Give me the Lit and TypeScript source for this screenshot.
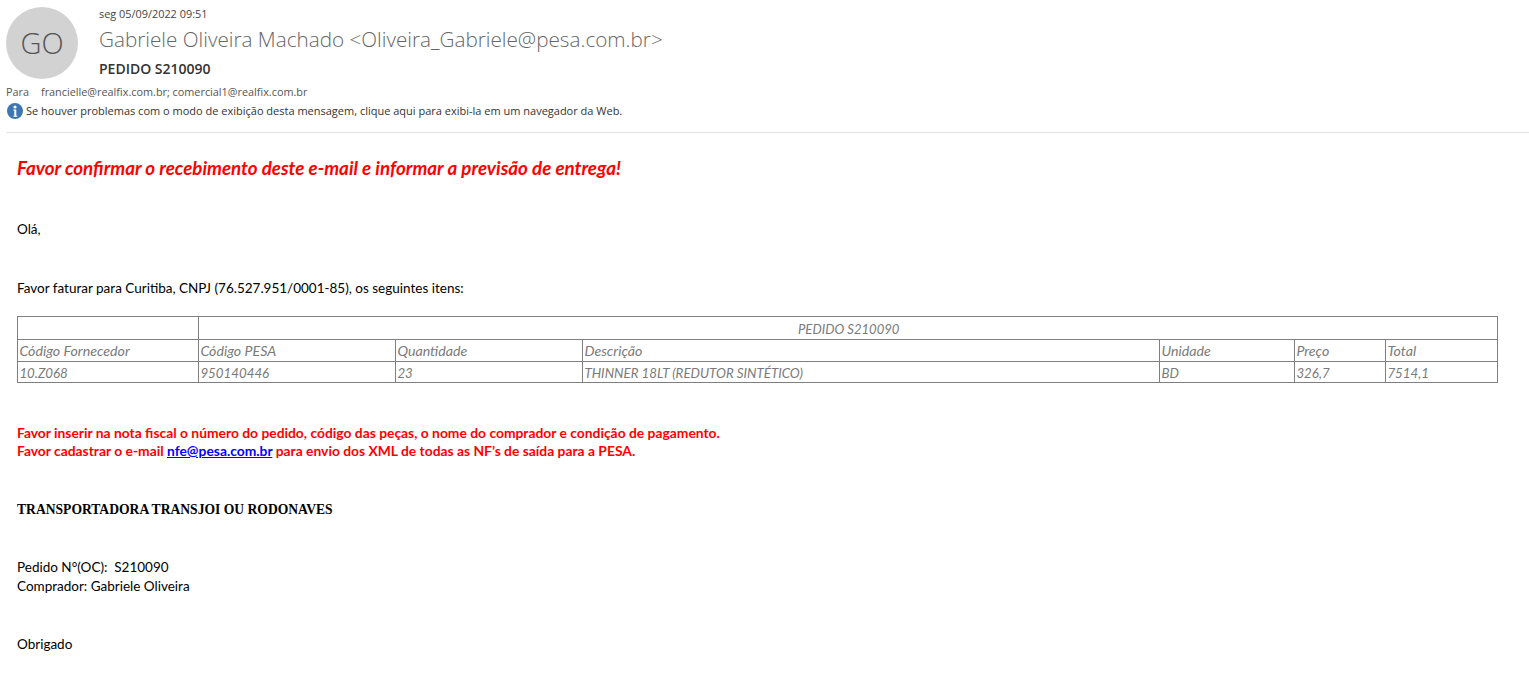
import { LitElement, html, css } from "lit";
import { customElement } from "lit/decorators.js";

@customElement("app-root")
export class AppRoot extends LitElement {
  static styles = css`
    :host { display: block; width: 1529px; height: 688px; overflow: hidden; background: #fff; color: #000; font-family: "Open Sans", sans-serif; }
    .head { display: flex; gap: 21px; padding: 7px 0 0 6px; height: 75px; }
    .avatar { width: 72px; height: 72px; padding-bottom: 2px; box-sizing: border-box; border-radius: 50%; background: #d2d2d2; color: #555; display: flex; align-items: center; justify-content: center; font-size: 29px; font-weight: 300; flex: none; }
    .meta { display: flex; flex-direction: column; }
    .date { font-size: 10.9px; line-height: 14px; color: #444; }
    .from { font-size: 20.7px; line-height: 28px; margin-top: 4px; color: #666; font-weight: 300; }
    .subj { font-size: 14px; font-weight: 600; line-height: 20px; margin-top: 6px; color: #333; }
    .to { display: flex; gap: 12px; padding-left: 6px; font-size: 10.85px; line-height: 14px; margin-top: 3px; color: #555; }
    .info { display: flex; align-items: center; gap: 3px; padding-left: 7px; margin-top: 4px; font-size: 11px; line-height: 16px; color: #333; }
    .info svg { flex: none; }
    hr { border: 0; border-top: 1px solid #e3e3e3; margin: 13px 0 0 6px; }
    .body { padding: 0 0 0 17px; font-family: "Lato", sans-serif; font-size: 13.5px; line-height: 18px; }
    .alert { font-size: 18.8px; font-weight: 700; font-style: italic; color: #f00; line-height: 24px; margin-top: 23px; }
    .hello { margin-top: 40px; }
    .fat { margin-top: 41px; }
    table { border-collapse: collapse; table-layout: fixed; width: 1481px; margin-top: 19px; color: #7a7a7a; font-style: italic; }
    td { border: 1px solid #7f7f7f; padding: 0 0 0 1.4px; height: 21px; line-height: 18px; white-space: nowrap; overflow: hidden; }
    tr.top td { height: 23px; font-size: 13.1px; padding-top: 2px; box-sizing: border-box; }
    tr.top td.c { text-align: center; }
    tr.labels td { font-size: 14.2px; }
    tr.values td { font-size: 13.3px; height: 19px; padding-top: 1px; }
    .red { color: #f00; font-size: 13.85px; font-weight: 700; margin-top: 41px; }
    .red a { color: #00f; text-decoration: underline; }
    .carrier { font-family: "Liberation Serif", serif; font-weight: 700; font-size: 13.6px; margin-top: 41px; }
    .order { margin-top: 39px; line-height: 19px; }
    .thanks { margin-top: 39px; }
  `;

  render() {
    const w = [181, 197, 187, 577, 135, 91, 112];
    return html`
      <div class="head">
        <div class="avatar">GO</div>
        <div class="meta">
          <div class="date">seg 05/09/2022 09:51</div>
          <div class="from">Gabriele Oliveira Machado &lt;Oliveira_Gabriele@pesa.com.br&gt;</div>
          <div class="subj">PEDIDO S210090</div>
        </div>
      </div>
      <div class="to"><span>Para</span><span>francielle@realfix.com.br; comercial1@realfix.com.br</span></div>
      <div class="info">
        <svg width="16" height="16" viewBox="0 0 16 16"><circle cx="8" cy="8" r="8" fill="#3f76b1"/><circle cx="8" cy="4" r="1.6" fill="#fff"/><path d="M6.3 6.6h3v6.2h1v1H6.3v-1h1V7.6h-1z" fill="#fff"/></svg>
        <span>Se houver problemas com o modo de exibição desta mensagem, clique aqui para exibi-la em um navegador da Web.</span>
      </div>
      <hr />
      <div class="body">
        <div class="alert">Favor confirmar o recebimento deste e-mail e informar a previsão de entrega!</div>
        <div class="hello">Olá,</div>
        <div class="fat">Favor faturar para Curitiba, CNPJ (76.527.951/0001-85), os seguintes itens:</div>
        <table>
          <colgroup>${w.map((x) => html`<col style="width:${x}px" />`)}</colgroup>
          <tr class="top"><td></td><td class="c" colspan="6">PEDIDO S210090</td></tr>
          <tr class="labels"><td>Código Fornecedor</td><td>Código PESA</td><td>Quantidade</td><td>Descrição</td><td>Unidade</td><td>Preço</td><td>Total</td></tr>
          <tr class="values"><td>10.Z068</td><td>950140446</td><td>23</td><td>THINNER 18LT (REDUTOR SINTÉTICO)</td><td>BD</td><td>326,7</td><td>7514,1</td></tr>
        </table>
        <div class="red">
          Favor inserir na nota fiscal o número do pedido, código das peças, o nome do comprador e condição de pagamento.<br />
          Favor cadastrar o e-mail <a href="#">nfe@pesa.com.br</a> para envio dos XML de todas as NF’s de saída para a PESA.
        </div>
        <div class="carrier">TRANSPORTADORA TRANSJOI OU RODONAVES</div>
        <div class="order">Pedido N°(OC):&nbsp; S210090<br />Comprador: Gabriele Oliveira</div>
        <div class="thanks">Obrigado</div>
      </div>
    `;
  }
}
